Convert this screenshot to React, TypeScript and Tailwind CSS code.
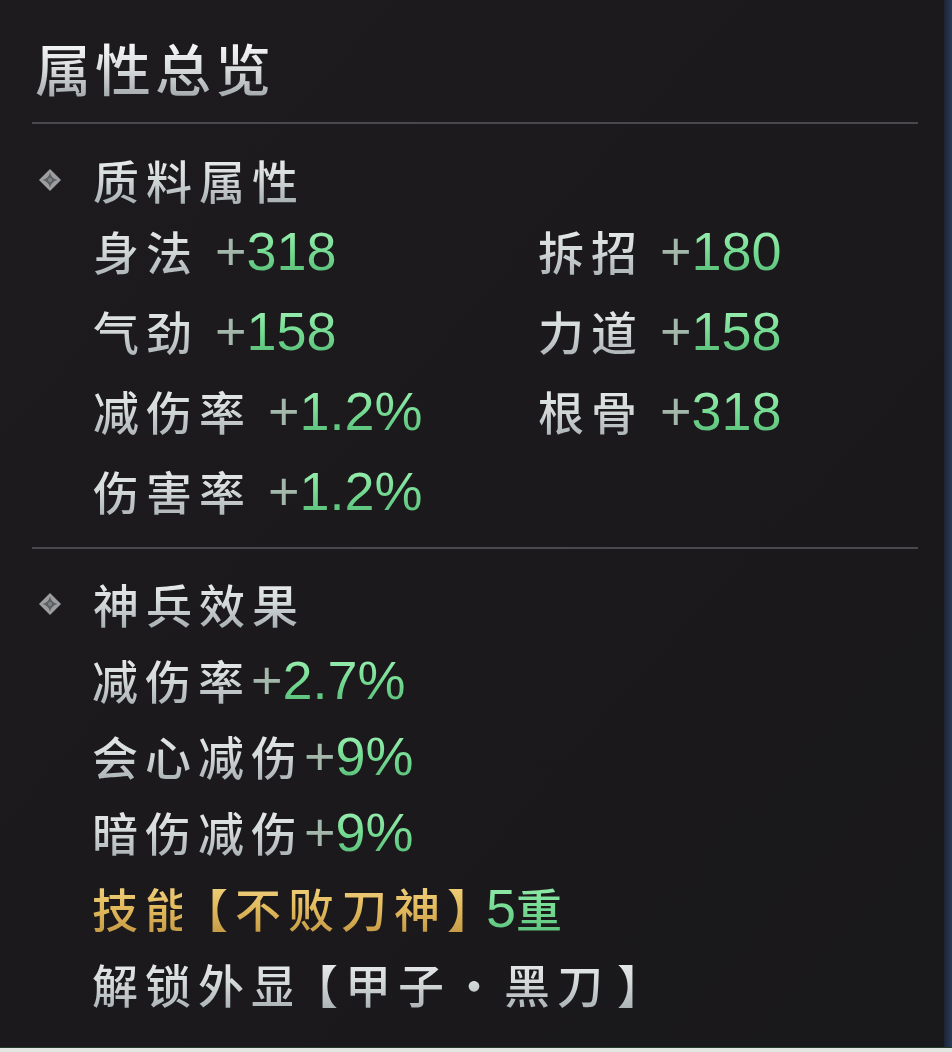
import React from "react";

const cjk = { fontFamily: '"Noto Sans CJK SC", "Noto Sans", sans-serif' };
const num = { fontFamily: '"Liberation Sans", Arial, sans-serif' };

type Stat = { label: string; value: string };

const baseStats: Stat[][] = [
  [
    { label: "身法", value: "318" },
    { label: "拆招", value: "180" },
  ],
  [
    { label: "气劲", value: "158" },
    { label: "力道", value: "158" },
  ],
  [
    { label: "减伤率", value: "1.2%" },
    { label: "根骨", value: "318" },
  ],
  [{ label: "伤害率", value: "1.2%" }],
];

const effects: Stat[] = [
  { label: "减伤率", value: "2.7%" },
  { label: "会心减伤", value: "9%" },
  { label: "暗伤减伤", value: "9%" },
];

const silver = "bg-gradient-to-b from-[#f6f8f8] via-[#d3d8d9] to-[#9aa2a3] bg-clip-text text-transparent";
const green = "bg-gradient-to-b from-[#a6f5bc] via-[#76dc93] to-[#52b672] bg-clip-text text-transparent";
const gold = "bg-gradient-to-b from-[#f8df92] via-[#e3bb5e] to-[#b88c3a] bg-clip-text text-transparent";

function Diamond() {
  return (
    <svg width="24" height="24" viewBox="0 0 24 24" className="shrink-0">
      <path d="M12 1 L23 12 L12 23 L1 12 Z" fill="#9c9ea0" />
      <path d="M12 4.5 C13 8.5 15.5 11 19.5 12 C15.5 13 13 15.5 12 19.5 C11 15.5 8.5 13 4.5 12 C8.5 11 11 8.5 12 4.5 Z" fill="#5d5f62" />
      <circle cx="12" cy="12" r="2" fill="#7e8083" />
    </svg>
  );
}

function Label({ children }: { children: React.ReactNode }) {
  return (
    <span style={cjk} className={`${silver} font-medium tracking-[7px]`}>
      {children}
    </span>
  );
}

function Value({ value, gap }: { value: string; gap?: boolean }) {
  return (
    <span style={num} className={`text-[54px] ${gap ? "ml-[16px]" : ""}`}>
      <span className="text-[#a3b8aa]">+</span>
      <span className={green}>{value}</span>
    </span>
  );
}

function SectionHead({ title }: { title: string }) {
  return (
    <div className="flex items-center h-[56px] pl-[6px]">
      <Diamond />
      <span className="ml-[31px] text-[46px] leading-[56px]">
        <Label>{title}</Label>
      </span>
    </div>
  );
}

export default function App() {
  return (
    <div className="w-[952px] h-[1052px] flex flex-col bg-[#1b191c] overflow-hidden">
      <div className="flex flex-1">
        <div className="flex-1 flex flex-col pl-[32px] pr-[26px] bg-gradient-to-br from-[#1d1b1e] via-[#1b191c] to-[#19181b]">
          {/* header */}
          <div className="pt-[35px] h-[99px] pl-[3px]">
            <h1
              style={cjk}
              className="text-[56px] leading-[64px] font-medium tracking-[4px] bg-gradient-to-b from-[#ffffff] via-[#dcdfe0] to-[#a0a6a8] bg-clip-text text-transparent inline-block"
            >
              属性总览
            </h1>
          </div>
          <div className="mt-[23px] h-[2px] bg-[#4a474d]" />

          {/* material attributes */}
          <div className="mt-[28px]">
            <SectionHead title="质料属性" />
          </div>
          <div className="mt-[2px] pl-[61px] flex flex-col">
            {baseStats.map((row, i) => (
              <div key={i} className="grid grid-cols-[445px_1fr] h-[80px] items-center">
                {row.map((s) => (
                  <div key={s.label} className="flex items-baseline text-[46px] leading-[80px]">
                    <Label>{s.label}</Label>
                    <Value value={s.value} gap />
                  </div>
                ))}
              </div>
            ))}
          </div>
          <div className="mt-[17px] h-[2px] bg-[#4a474d]" />

          {/* weapon effects */}
          <div className="mt-[27px]">
            <SectionHead title="神兵效果" />
          </div>
          <div className="mt-[9px] pl-[60px] flex flex-col">
            {effects.map((s) => (
              <div key={s.label} className="flex items-baseline text-[46px] leading-[76px] h-[76px]">
                <Label>{s.label}</Label>
                <Value value={s.value} />
              </div>
            ))}
            <div className="flex items-baseline text-[46px] leading-[76px] h-[76px] font-medium" style={cjk}>
              <span className={`${gold} tracking-[7px]`}>技</span>
              <span className={`${gold} tracking-[-9px]`}>能</span>
              <span className={`${gold} tracking-[7px]`}>【不败刀神</span>
              <span className={`${gold} tracking-[-7px]`}>】</span>
              <span className={green}>
                <span style={num} className="text-[54px] font-normal">5</span>重
              </span>
            </div>
            <div className="flex items-baseline text-[46px] leading-[76px] h-[76px]">
              <Label>解锁外</Label>
              <span style={cjk} className={`${silver} font-medium tracking-[-5px]`}>显</span>
              <Label>【甲子·黑</Label>
              <span style={cjk} className={`${silver} font-medium tracking-[14px]`}>刀</span>
              <Label>】</Label>
            </div>
          </div>
        </div>
        {/* window edge */}
        <div className="w-[8px] bg-gradient-to-r from-[#1c2535] to-[#2a3a58]" />
      </div>
      <div className="h-[5px] bg-[#e4e6e4] border-t border-[#243a2c]" />
    </div>
  );
}
